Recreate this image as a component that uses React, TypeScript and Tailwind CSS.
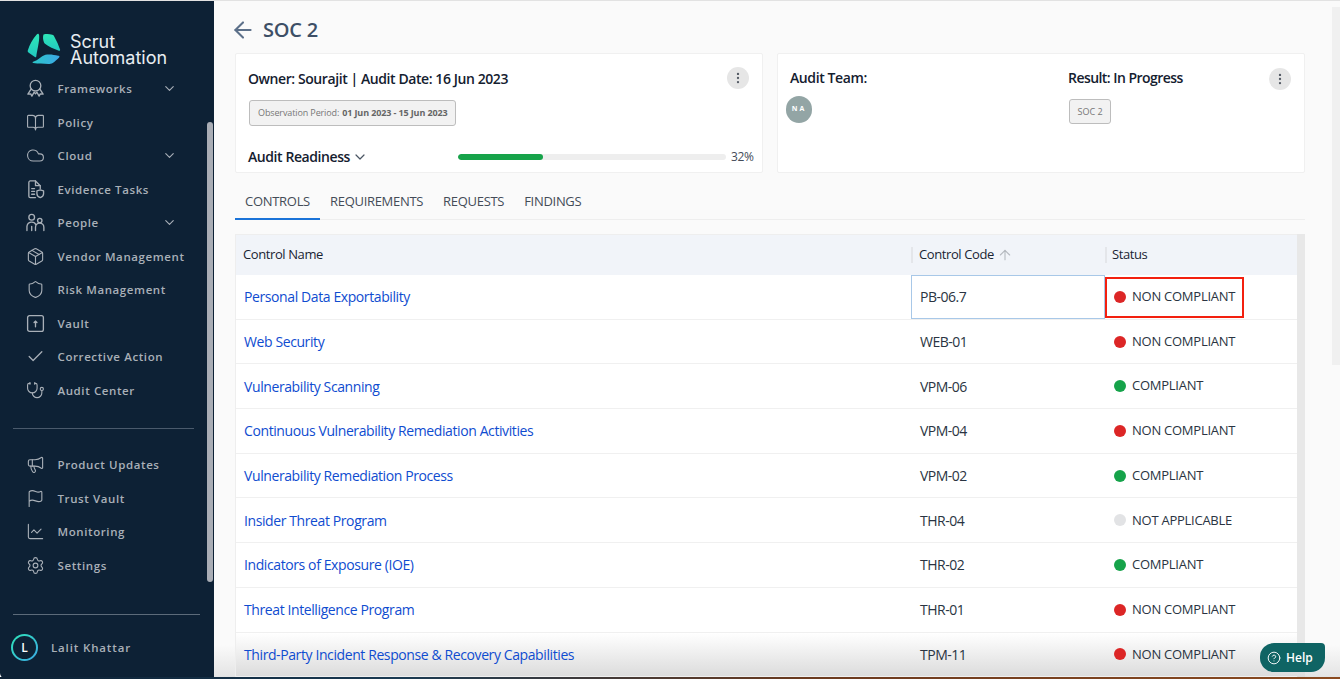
import React from "react";
import { ArrowLeft, BookOpen, Check, ChevronDown, ChartLine, Cloud, EllipsisVertical, Flag, ArrowUp, Megaphone, Package, Settings, Shield, Stethoscope, CircleHelp } from "lucide-react";

const ic = "w-[19px] h-[19px] text-[#a9b0b8]";

const Award = () => (
  <svg viewBox="0 0 20 20" className={ic} fill="none" stroke="currentColor" strokeWidth="1.4" strokeLinejoin="round" strokeLinecap="round">
    <circle cx="10" cy="7" r="5.6" />
    <path d="M5.5 10.5 2 16l3-.3 1.2 2.3 2.4-4.2 1.4 1.8 1.4-1.8 2.4 4.2 1.2-2.3 3 .3-3.5-5.5" />
  </svg>
);
const Evidence = () => (
  <svg viewBox="0 0 20 20" className={ic} fill="none" stroke="currentColor" strokeWidth="1.4" strokeLinejoin="round" strokeLinecap="round">
    <path d="M10 18.5H4.5a1.5 1.5 0 0 1-1.500-1.500V2.500A1.500 1.500 0 0 1 4.500 1H10l5 5v3" />
    <path d="M10 1v5h5M6 9h3M6 12h3M6 15h3" />
    <path d="M11.500 11.500 15 10.500l3.500 1v3c0 2-1.500 3.300-3.500 4-2-.7-3.500-2-3.500-4z" />
  </svg>
);
const People = () => (
  <svg viewBox="0 0 20 20" className={ic} fill="none" stroke="currentColor" strokeWidth="1.4" strokeLinecap="round">
    <circle cx="6" cy="4.500" r="3" />
    <circle cx="14.500" cy="8" r="2.300" />
    <path d="M1 18.500V14a5 5 0 0 1 9.500-1.500M10 18.500V15a4.300 4.300 0 0 1 8.800 0v3.500M6 18.500V14" />
  </svg>
);
const VaultIcon = () => (
  <svg viewBox="0 0 20 20" className={ic} fill="none" stroke="currentColor" strokeWidth="1.4" strokeLinecap="round">
    <rect x="1.700" y="1.700" width="16.600" height="16.600" rx="2" />
    <path d="M10 13.500V7.500M8.500 9 10 7.500 11.500 9" />
  </svg>
);
const Chev = () => <ChevronDown className="w-[15px] h-[15px] text-[#a9b0b8]" strokeWidth={1.8} />;

const top = [
  { n: "Frameworks", i: <Award />, c: true },
  { n: "Policy", i: <BookOpen className={ic} strokeWidth={1.4} /> },
  { n: "Cloud", i: <Cloud className={ic} strokeWidth={1.4} />, c: true },
  { n: "Evidence Tasks", i: <Evidence /> },
  { n: "People", i: <People />, c: true },
  { n: "Vendor Management", i: <Package className={ic} strokeWidth={1.4} /> },
  { n: "Risk Management", i: <Shield className={ic} strokeWidth={1.4} /> },
  { n: "Vault", i: <VaultIcon /> },
  { n: "Corrective Action", i: <Check className={ic} strokeWidth={1.6} /> },
  { n: "Audit Center", i: <Stethoscope className={ic} strokeWidth={1.4} /> },
];
const bottom = [
  { n: "Product Updates", i: <Megaphone className={ic} strokeWidth={1.4} /> },
  { n: "Trust Vault", i: <Flag className={ic} strokeWidth={1.4} /> },
  { n: "Monitoring", i: <ChartLine className={ic} strokeWidth={1.4} /> },
  { n: "Settings", i: <Settings className={ic} strokeWidth={1.4} /> },
];

const Item = ({ n, i, c }: { n: string; i: React.ReactNode; c?: boolean }) => (
  <div className="h-[33.5px] flex items-center pl-[26px] pr-[37px] shrink-0">
    <div className="w-[31.500px] shrink-0 flex items-center">{i}</div>
    <span className="flex-1 text-[11.500px] font-semibold tracking-[0.6px] text-[#a9b0b8] whitespace-nowrap">{n}</span>
    {c && <Chev />}
  </div>
);

const rows = [
  ["Personal Data Exportability", "PB-06.7", "n"],
  ["Web Security", "WEB-01", "n"],
  ["Vulnerability Scanning", "VPM-06", "c"],
  ["Continuous Vulnerability Remediation Activities", "VPM-04", "n"],
  ["Vulnerability Remediation Process", "VPM-02", "c"],
  ["Insider Threat Program", "THR-04", "a"],
  ["Indicators of Exposure (IOE)", "THR-02", "c"],
  ["Threat Intelligence Program", "THR-01", "n"],
  ["Third-Party Incident Response & Recovery Capabilities", "TPM-11", "n"],
];
const status: Record<string, { l: string; d: string }> = {
  n: { l: "NON COMPLIANT", d: "bg-[#dc2626]" },
  c: { l: "COMPLIANT", d: "bg-[#16a34a]" },
  a: { l: "NOT APPLICABLE", d: "bg-[#e2e3e5]" },
};

const Dots = () => (
  <div className="w-[22px] h-[22px] shrink-0 rounded-full bg-[#e6e6e6] flex items-center justify-center">
    <EllipsisVertical className="w-[14px] h-[14px] text-[#555c66]" strokeWidth={2} />
  </div>
);

export default function App() {
  return (
    <div className="relative w-[1340px] h-[679px] overflow-hidden flex flex-col bg-white font-['Open_Sans',sans-serif]">
      <div className="h-[1px] bg-[#e2e2e2] shrink-0" />
      <div className="flex flex-1 min-h-0">
        <aside className="relative w-[214px] shrink-0 bg-[#0d2135] flex flex-col rounded-bl-[6px]">
          <div className="flex items-start pl-[27px] pt-[31px] h-[71px] shrink-0">
            <div className="flex items-center">
              <svg viewBox="0 0 36 36" className="w-[35px] h-[35px] shrink-0">
                <defs>
                  <linearGradient id="g1" x1="0" y1="0" x2="0" y2="1">
                    <stop offset="0" stopColor="#2ee6b8" />
                    <stop offset="1" stopColor="#22c8c0" />
                  </linearGradient>
                  <linearGradient id="g2" x1="0" y1="0" x2="1" y2="0">
                    <stop offset="0" stopColor="#2bc6c8" />
                    <stop offset="1" stopColor="#3ca8e6" />
                  </linearGradient>
                </defs>
                <path d="M10 2.500C6 7 2.500 13 .8 19c-.3 1 .2 1.800 1 2.400L8.500 26c.6.3 1-.2 1.100-1C10 20 13 10 12.500 3.500 12.300 1.500 11 1.500 10 2.500Z" fill="url(#g1)" />
                <path d="M17 2.500c3-.7 6-.5 9 .2 1 .3 1.500.8 2 1.800 2.500 4.500 4.500 9 6 13.500.3 1-.3 1.500-1.200 1.200C28 17.500 22 15 18.500 12 16.500 10 16 5 17 2.500Z" fill="url(#g1)" />
                <path d="M32 24.500c1.500-.3 1.800.7 1 1.800-2 2-4 4-6.500 5.500-1.500.9-3 1-4.500 1-5 0-10.500 0-15.500-.8-1-.2-1-1-.2-1.400C12 29 14 25 19 23.500c4-1 9 0 13 1Z" fill="url(#g2)" />
              </svg>
              <div className="ml-[8px] font-['Inter',sans-serif] text-[18px] leading-[16px] text-[#e8edf1]">
                <div>Scrut</div>
                <div>Automation</div>
              </div>
            </div>
          </div>
          {top.map((t) => <Item key={t.n} {...t} />)}
          <div className="h-[1px] bg-[#4a5a6c] ml-[13px] w-[181px] mt-[21px] mb-[19px] shrink-0" />
          {bottom.map((t) => <Item key={t.n} {...t} />)}
          <div className="h-[1px] bg-[#5c6b7a] ml-[13px] w-[187px] mt-[32px] shrink-0" />
          <div className="flex items-center pl-[11px] mt-[19px]">
            <div className="w-[27px] h-[27px] rounded-full p-[2px] bg-[linear-gradient(135deg,#2ee6b8,#3ca8e6)]">
              <div className="w-full h-full rounded-full bg-[#0d2135] flex items-center justify-center text-[12px] font-semibold text-white">L</div>
            </div>
            <span className="ml-[13px] text-[11.500px] font-semibold tracking-[0.85px] text-[#a9b0b8]">Lalit Khattar</span>
          </div>
          <div className="absolute left-[207px] top-[121px] w-[6px] h-[460px] rounded-full bg-[#a9adb5]" />
        </aside>

        <main className="flex-1 min-w-0 bg-[#fafafa] pl-[21px] pr-[35px] flex flex-col">
          <div className="flex items-center h-[52px] pt-[5px] shrink-0">
            <ArrowLeft className="w-[26px] h-[26px] -ml-[5px] mr-[7px] text-[#5c7089]" strokeWidth={1.9} />
            <h1 className="text-[20px] font-semibold text-[#3d4f66] leading-none tracking-[-0.01em]">SOC 2</h1>
          </div>
          <div className="flex gap-[14px] shrink-0">
            <section className="w-[528px] h-[120px] bg-white border border-[#f0f0f0] rounded-[2px] pl-[12px] pr-[13px] flex flex-col">
              <div className="flex items-center justify-between pt-[13px]">
                <span className="text-[14px] font-semibold tracking-[-0.42px] text-[#14202f] whitespace-nowrap">Owner: Sourajit | Audit Date: 16 Jun 2023</span>
                <Dots />
              </div>
              <div className="mt-[11px] self-start h-[26px] pl-[8px] pr-[7px] flex items-center gap-[3px] bg-[#f2f2f2] border border-[#bdbdbd] rounded-[3px] text-[9px] tracking-[-0.12px] whitespace-nowrap ml-[1px]">
                <span className="text-[#777]">Observation Period:</span>
                <span className="font-bold text-[#666]">01 Jun 2023 - 15 Jun 2023</span>
              </div>
              <div className="flex items-center mt-[20px] -mr-[6px]">
                <div className="w-[210px] shrink-0 flex items-center">
                  <span className="text-[14px] font-semibold tracking-[-0.42px] text-[#14202f] whitespace-nowrap">Audit Readiness</span>
                  <ChevronDown className="w-[16px] h-[16px] ml-[2px] text-[#4a5563]" strokeWidth={1.8} />
                </div>
                <div className="w-[268px] shrink-0 h-[6px] mt-[1px] rounded-full bg-[#eeeeee] overflow-hidden">
                  <div className="w-[85px] h-full rounded-full bg-[#16a34a]" />
                </div>
                <span className="ml-[5px] shrink-0 text-[12px] tracking-[-0.3px] text-[#444c58]">32%</span>
              </div>
            </section>
            <section className="w-[528px] h-[120px] bg-white border border-[#f0f0f0] rounded-[2px] flex">
              <div className="w-[290px] pl-[12px] pt-[14px]">
                <div className="text-[14px] font-semibold tracking-[-0.4px] text-[#14202f] leading-[19px]">Audit Team:</div>
                <div className="mt-[9px] -ml-[4px] w-[26px] h-[27px] rounded-full bg-[#93a5a5] flex items-center justify-center text-[7px] font-bold tracking-[0.3em] text-white">NA</div>
              </div>
              <div className="flex-1 pt-[14px]">
                <div className="flex items-start justify-between pr-[13px]">
                  <span className="text-[14px] font-semibold tracking-[-0.55px] text-[#14202f] leading-[19px]">Result: In Progress</span>
                  <Dots />
                </div>
                <div className="mt-[9px] ml-[1px] w-[42px] h-[25px] flex items-center justify-center bg-[#f2f2f2] border border-[#bdbdbd] rounded-[3px] text-[9px] text-[#777]">SOC 2</div>
              </div>
            </section>
          </div>
          <nav className="flex mt-[16px] h-[31px] border-b border-[#eeeeee] text-[13px] tracking-[-0.3px] text-[#444c58] shrink-0">
            <div className="w-[85px] text-center border-b-2 border-[#1a73d8] h-[31px] leading-[24px]">CONTROLS</div>
            <div className="ml-[10px] leading-[24px]">REQUIREMENTS</div>
            <div className="ml-[20px] leading-[24px]">REQUESTS</div>
            <div className="ml-[20px] leading-[24px]">FINDINGS</div>
          </nav>
          <div className="flex mt-[14px] flex-1 min-h-0">
            <div className="relative z-10 w-[1062px] border-l border-[#eeeeee]">
              <div className="grid grid-cols-[675px_194px_192px] h-[41px] pb-[1px] bg-[#f1f4f9] border-t border-[#eeeeee] items-center text-[13px] tracking-[-0.4px] text-[#1a2433] font-medium">
                <div className="pl-[7px]">Control Name</div>
                <div className="pl-[6px] border-l-2 border-[#e4e6ea] h-[16px] flex items-center">
                  Control Code
                  <ArrowUp className="w-[16px] h-[16px] ml-[3px] text-[#b5b9bf]" strokeWidth={1.600} />
                </div>
                <div className="pl-[5px] border-l-2 border-[#e4e6ea] h-[16px] flex items-center">Status</div>
              </div>
              {rows.map(([name, code, s], idx) => (
                <div key={code} className={`grid grid-cols-[675px_194px_192px] h-[44.700px] border-b border-[#f0f0f0] items-center ${idx === 8 ? "bg-gradient-to-b from-white to-[#dcdcdc]" : "bg-white"}`}>
                  <div className="pl-[8px] text-[#0f4cd0] text-[14px] tracking-[-0.4px] whitespace-nowrap">{name}</div>
                  <div className={`text-[14px] tracking-[-0.5px] text-[#2a3442] ${idx === 0 ? "h-full flex items-center pl-[8px] border border-[#a8c8e8]" : "pl-[9px]"}`}>{code}</div>
                  <div className="relative h-full flex items-center pl-[9px] text-[#2a3442] text-[13px] tracking-[-0.25px]">
                    <span className={`w-[12px] h-[12px] rounded-full mr-[6px] ${status[s].d}`} />
                    {status[s].l}
                    {idx === 0 && <div className="absolute left-0 top-[2px] w-[139px] h-[41px] border-2 border-[#f3200f]" />}
                  </div>
                </div>
              ))}
            </div>
            <div className="w-[8px] bg-[#e8e8e8]" />
          </div>
        </main>
      </div>

      <div className="absolute left-[1332px] top-[7px] w-[8px] h-[358px] bg-[#f0f0f0]" />
      <div className="absolute left-[214px] right-0 bottom-0 h-[34px] bg-gradient-to-b from-transparent to-[#d8d8d8]/70" />
      <div className="absolute z-20 left-[1260px] top-[643px] w-[65px] h-[29px] bg-[#0f6464] rounded-tl-[14px] rounded-br-[14px] rounded-tr-[4px] rounded-bl-[14px] flex items-center pl-[7px] gap-[5px] text-white text-[12px] font-semibold">
        <CircleHelp className="w-[14px] h-[14px]" strokeWidth={1.600} />
        Help
      </div>
      <div className="absolute z-20 left-0 right-0 bottom-0 h-[2px] bg-[linear-gradient(90deg,#0d2135_0%,#1a3a52_30%,#6b3a1f_60%,#8a4a20_100%)]" />
    </div>
  );
}
